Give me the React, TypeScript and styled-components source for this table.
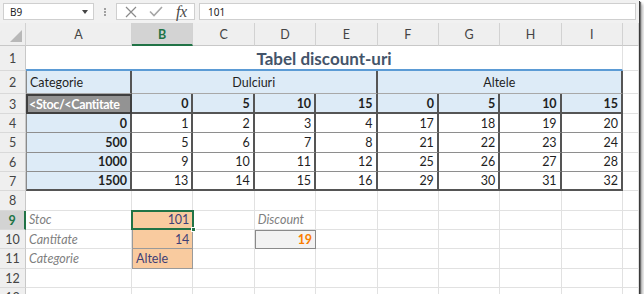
import React from "react";
import styled, { createGlobalStyle, css } from "styled-components";

const GRID = "#e1e1e1";
const DARK = "#555555";
const MID = "#8e8e8e";
const BLUE_FILL = "#ddebf7";
const GREEN = "#217346";

const Global = createGlobalStyle`
  html, body { margin: 0; padding: 0; background: #ffffff; }
  body { font-family: Lato, "Liberation Sans", sans-serif; }
`;

const Frame = styled.div`
  width: 639px;
  height: 294px;
  overflow: hidden;
  background: #ffffff;
  display: flex;
  flex-direction: column;
  box-shadow: 1px 1px 0 #3a3a3a, 2px 2px 1px #6e6e6e, 4px 4px 3px rgba(0, 0, 0, 0.28);
`;

/* ---------- formula bar ---------- */
const FormulaBar = styled.div`
  height: 23px;
  flex: none;
  box-sizing: border-box;
  padding: 3px;
  background: #f1f1f1;
  display: flex;
  align-items: stretch;
  font-family: "Noto Sans", "Liberation Sans", sans-serif;
  font-size: 10px;
  color: #222;
`;

const NameBox = styled.div`
  width: 91px;
  box-sizing: border-box;
  background: #fff;
  border: 1px solid #cfcfcf;
  display: flex;
  align-items: center;
  justify-content: space-between;
  padding: 0 5px 0 6px;
`;

const Caret = styled.span`
  width: 0;
  height: 0;
  border-left: 3px solid transparent;
  border-right: 3px solid transparent;
  border-top: 4px solid #444;
`;

const Grip = styled.div`
  width: 22px;
  display: flex;
  align-items: center;
  justify-content: center;
  &::before {
    content: "";
    width: 2px;
    height: 2px;
    background: #a0a0a0;
    box-shadow: 0 -3px 0 #a0a0a0, 0 3px 0 #a0a0a0;
  }
`;

const FuncBox = styled.div`
  width: 79px;
  box-sizing: border-box;
  background: #fff;
  border: 1px solid #cfcfcf;
  display: flex;
  align-items: center;
  padding-left: 1px;
`;

const FuncSlot = styled.div`
  width: 26px;
  height: 100%;
  display: flex;
  align-items: center;
  justify-content: center;
`;

const Fx = styled.span`
  font-family: "Liberation Serif", "DejaVu Serif", serif;
  font-style: italic;
  font-size: 16px;
  color: #4a4a4a;
  line-height: 1;
  letter-spacing: -0.5px;
`;

const FormulaInput = styled.div`
  flex: 1;
  margin-left: 4px;
  box-sizing: border-box;
  background: #fff;
  border: 1px solid #cfcfcf;
  display: flex;
  align-items: center;
  padding-left: 8px;
`;

/* ---------- sheet ---------- */
const Sheet = styled.div`
  flex: none;
  display: grid;
  grid-template-columns: 26px 106px repeat(8, 61.375px) 1fr;
  grid-template-rows: 23px 25px 23px 20px repeat(9, 19.33px) 20px;
  font-size: 12.5px;
  color: #1f1f1f;
`;

const Corner = styled.div`
  position: relative;
  background: #efefef;
  box-sizing: border-box;
  border-right: 1px solid #d2d2d2;
  border-bottom: 1px solid #c8c8c8;
  &::after {
    content: "";
    position: absolute;
    right: 3px;
    bottom: 3px;
    width: 0;
    height: 0;
    border-left: 12px solid transparent;
    border-bottom: 12px solid #b8b8b8;
  }
`;

const ColHead = styled.div<{ $active?: boolean }>`
  box-sizing: border-box;
  background: ${(p) => (p.$active ? "#d3d3d3" : "#efefef")};
  color: ${(p) => (p.$active ? GREEN : "#444")};
  font-weight: ${(p) => (p.$active ? 700 : 400)};
  border-right: 1px solid #d2d2d2;
  border-bottom: ${(p) => (p.$active ? `2px solid ${GREEN}` : "1px solid #c8c8c8")};
  display: flex;
  align-items: center;
  justify-content: center;
  padding-top: 1px;
`;

const RowHead = styled.div<{ $active?: boolean }>`
  box-sizing: border-box;
  background: ${(p) => (p.$active ? "#d3d3d3" : "#efefef")};
  color: ${(p) => (p.$active ? GREEN : "#444")};
  font-weight: ${(p) => (p.$active ? 700 : 400)};
  border-right: ${(p) => (p.$active ? `2px solid ${GREEN}` : "1px solid #c8c8c8")};
  border-bottom: 1px solid #d9d9d9;
  display: flex;
  align-items: center;
  justify-content: center;
  padding-top: 1px;
  overflow: hidden;
`;

type CellProps = { $span?: number; $align?: "left" | "right" | "center" };

const Cell = styled.div<CellProps>`
  grid-column: span ${(p) => p.$span ?? 1};
  box-sizing: border-box;
  min-width: 0;
  border-right: 1px solid ${GRID};
  border-bottom: 1px solid ${GRID};
  display: flex;
  align-items: center;
  justify-content: ${(p) =>
    p.$align === "right" ? "flex-end" : p.$align === "center" ? "center" : "flex-start"};
  padding: 1px 3px 0 3px;
  line-height: 16px;
  white-space: nowrap;
  overflow: hidden;
`;

const TitleCell = styled(Cell)`
  justify-content: center;
  align-items: flex-end;
  padding: 0;
  font-size: 17px;
  line-height: 20px;
  font-weight: 700;
  color: #44546a;
  border-bottom: 2px solid #5b9bd5;
`;

const tableEdges = css<{ $first?: boolean; $last?: boolean }>`
  border-right: 2px solid ${DARK};
  border-bottom: ${(p) => (p.$last ? `2px solid ${DARK}` : `1px solid ${MID}`)};
  ${(p) => p.$first && `border-left: 1px solid #8a8a8a;`}
`;

const BandCell = styled(Cell)<{ $first?: boolean }>`
  background: ${BLUE_FILL};
  border-right: 2px solid ${DARK};
  border-bottom: 1px solid #a8a8a8;
  ${(p) => p.$first && `border-left: 1px solid #8a8a8a;`}
`;

const CheckCell = styled(Cell)`
  background: #939393;
  color: #ffffff;
  font-weight: 700;
  border: 2px solid #3f3f3f;
  padding-left: 1px;
  letter-spacing: -0.35px;
`;

const HeadNumCell = styled(Cell)`
  background: ${BLUE_FILL};
  font-weight: 700;
  border-right: 2px solid ${DARK};
  border-bottom: 2px solid ${DARK};
`;

const KeyCell = styled(Cell)<{ $first?: boolean; $last?: boolean }>`
  background: ${BLUE_FILL};
  font-weight: 700;
  ${tableEdges}
`;

const ValueCell = styled(Cell)<{ $first?: boolean; $last?: boolean }>`
  background: #ffffff;
  ${tableEdges}
`;

const NoteCell = styled(Cell)`
  font-style: italic;
  color: #7f7f7f;
`;

const InputCell = styled(Cell)<{ $selected?: boolean }>`
  position: relative;
  overflow: visible;
  background: #f9cb9f;
  color: #3f3f76;
  border-left: 1px solid #9a9a9a;
  border-right: 1px solid #9a9a9a;
  border-bottom: 1px solid #9a9a9a;
  ${(p) =>
    p.$selected &&
    css`
      &::before {
        content: "";
        position: absolute;
        inset: -1px -2px -1px -2px;
        border: 2px solid ${GREEN};
        pointer-events: none;
      }
      &::after {
        content: "";
        position: absolute;
        right: -4px;
        bottom: -3px;
        width: 5px;
        height: 5px;
        background: ${GREEN};
        border: 1px solid #fff;
        box-sizing: border-box;
        z-index: 2;
      }
    `}
`;

const CalcCell = styled(Cell)`
  background: #f2f2f2;
  color: #fa7d00;
  font-weight: 700;
  border: 1px solid #8a8a8a;
`;

const Blank = () => <Cell />;

const COLS = ["A", "B", "C", "D", "E", "F", "G", "H", "I"];
const HEADS = [0, 5, 10, 15, 0, 5, 10, 15];
const KEYS = [0, 500, 1000, 1500];

const valueAt = (r: number, c: number) =>
  c < 4 ? r * 4 + c + 1 : 16 + r * 4 + (c - 4) + 1;

const XIcon = () => (
  <svg width="12" height="12" viewBox="0 0 12 12">
    <path d="M1 1 L11 11 M11 1 L1 11" stroke="#8a8a8a" strokeWidth="1.2" fill="none" />
  </svg>
);

const CheckIcon = () => (
  <svg width="14" height="11" viewBox="0 0 14 11">
    <path d="M1 5.5 L5 9.5 L13 1" stroke="#a6a6a6" strokeWidth="1.6" fill="none" />
  </svg>
);

const blanks = (n: number) => Array.from({ length: n }, (_, i) => <Blank key={i} />);

export default function App() {
  return (
    <>
      <Global />
      <Frame>
        <FormulaBar>
          <NameBox>
            <span>B9</span>
            <Caret />
          </NameBox>
          <Grip />
          <FuncBox>
            <FuncSlot>
              <XIcon />
            </FuncSlot>
            <FuncSlot>
              <CheckIcon />
            </FuncSlot>
            <FuncSlot>
              <Fx>fx</Fx>
            </FuncSlot>
          </FuncBox>
          <FormulaInput>101</FormulaInput>
        </FormulaBar>

        <Sheet>
          <Corner />
          {COLS.map((c) => (
            <ColHead key={c} $active={c === "B"}>
              {c}
            </ColHead>
          ))}
          <ColHead />

          <RowHead>1</RowHead>
          <TitleCell $span={9}>Tabel discount-uri</TitleCell>
          <Blank />

          <RowHead>2</RowHead>
          <BandCell $first>Categorie</BandCell>
          <BandCell $span={4} $align="center">
            Dulciuri
          </BandCell>
          <BandCell $span={4} $align="center">
            Altele
          </BandCell>
          <Blank />

          <RowHead>3</RowHead>
          <CheckCell>&lt;Stoc/&lt;Cantitate</CheckCell>
          {HEADS.map((h, i) => (
            <HeadNumCell key={i} $align="right">
              {h}
            </HeadNumCell>
          ))}
          <Blank />

          {KEYS.map((k, r) => (
            <React.Fragment key={k}>
              <RowHead>{r + 4}</RowHead>
              <KeyCell $align="right" $first $last={r === 3}>
                {k}
              </KeyCell>
              {HEADS.map((_, c) => (
                <ValueCell key={c} $align="right" $last={r === 3}>
                  {valueAt(r, c)}
                </ValueCell>
              ))}
              <Blank />
            </React.Fragment>
          ))}

          <RowHead>8</RowHead>
          {blanks(10)}

          <RowHead $active>9</RowHead>
          <NoteCell>Stoc</NoteCell>
          <InputCell $align="right" $selected>
            101
          </InputCell>
          <Blank />
          <NoteCell>Discount</NoteCell>
          {blanks(6)}

          <RowHead>10</RowHead>
          <NoteCell>Cantitate</NoteCell>
          <InputCell $align="right">14</InputCell>
          <Blank />
          <CalcCell $align="right">19</CalcCell>
          {blanks(6)}

          <RowHead>11</RowHead>
          <NoteCell>Categorie</NoteCell>
          <InputCell>Altele</InputCell>
          {blanks(8)}

          <RowHead>12</RowHead>
          {blanks(10)}

          <RowHead>13</RowHead>
          {blanks(10)}
        </Sheet>
      </Frame>
    </>
  );
}
